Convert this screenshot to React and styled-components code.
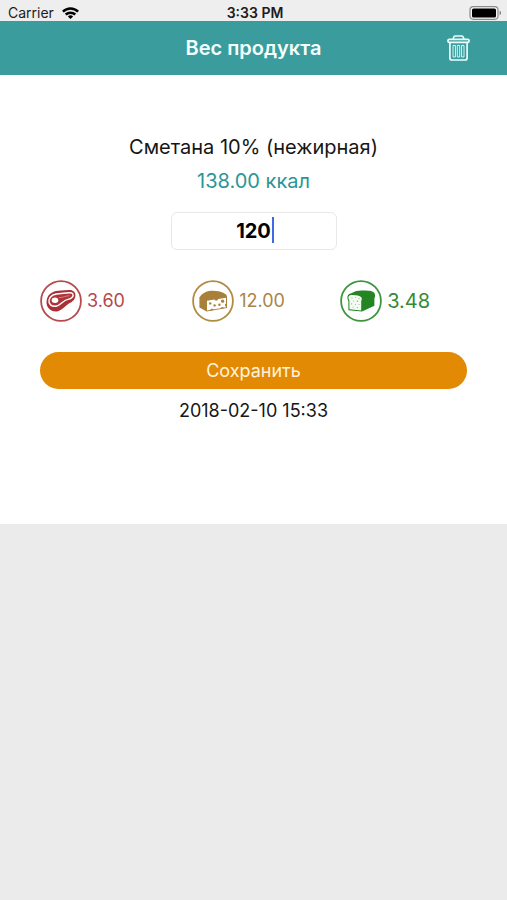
import React, { useState } from 'react';
import styled, { createGlobalStyle } from 'styled-components';

const GlobalStyle = createGlobalStyle`
    * {
        box-sizing: border-box;
    }
    body {
        margin: 0;
        background-color: #ebebeb;
        font-family: 'Inter', 'Liberation Sans', sans-serif;
    }
`

const StatusBar = styled.div`
    display: grid;
    grid-template-columns: 1fr auto 1fr;
    align-items: center;
    height: 21px;
    padding: 5px 5px 0 8px;
    background-color: #eeeeee;
    color: #1c1c1c;
    font-size: 14px;
    line-height: 16px;
`

const Carrier = styled.div`
    display: flex;
    align-items: center;
    gap: 8px;
`

const Time = styled.div`
    font-weight: 600;
`

const Battery = styled.div`
    display: flex;
    justify-content: flex-end;
`

const Header = styled.header`
    display: grid;
    grid-template-columns: 1fr auto 1fr;
    align-items: center;
    height: 54px;
    padding: 0 37px;
    background-color: #3a9c9c;
`

const Title = styled.h1`
    grid-column: 2;
    margin: 0;
    color: #f4ffff;
    font-size: 20px;
    line-height: 24px;
    font-weight: 600;
`

const DeleteButton = styled.button`
    display: flex;
    justify-self: end;
    padding: 0;
    border: none;
    background: none;
    cursor: pointer;
`

const Content = styled.form`
    display: flex;
    flex-direction: column;
    align-items: center;
    padding: 60px 40px 101px;
    background-color: #ffffff;
`

const ProductName = styled.label`
    color: #161616;
    font-size: 20px;
    line-height: 24px;
`

const Calories = styled.div`
    margin-top: 10px;
    color: #2b9696;
    font-size: 20px;
    line-height: 24px;
`

const WeightField = styled.div`
    position: relative;
    width: 166px;
    margin-top: 19px;
`

const WeightInput = styled.input`
    display: block;
    width: 100%;
    height: 38px;
    padding: 0;
    border: 1px solid #e8e8e8;
    border-radius: 6px;
    outline: none;
    background-color: #ffffff;
    color: #000000;
    caret-color: transparent;
    font-family: inherit;
    font-size: 20px;
    font-weight: 700;
    text-align: center;
`

const Caret = styled.span`
    position: absolute;
    top: 5px;
    left: calc(50% + 18px);
    width: 2px;
    height: 26px;
    background-color: #4169e1;
`

const Nutrients = styled.div`
    display: grid;
    grid-template-columns: 36fr 35fr 30fr;
    width: 100%;
    margin-top: 30px;
`

const Nutrient = styled.div`
    display: flex;
    align-items: center;
    gap: 5px;
    color: ${props => props.$color};
    font-size: ${props => props.$large ? '20px' : '18px'};
    line-height: 24px;
`

const SaveButton = styled.button`
    width: 100%;
    height: 37px;
    margin-top: 30px;
    border: none;
    border-radius: 19px;
    background-color: #e38a05;
    color: #fff3dc;
    font-family: inherit;
    font-size: 18px;
    cursor: pointer;
`

const SavedAt = styled.time`
    margin-top: 10px;
    color: #161616;
    font-size: 18px;
    line-height: 24px;
`

const WifiIcon = () => (
    <svg width="17" height="12" viewBox="0 0 17 12" fill="none" stroke="#000" strokeWidth="2.5" aria-hidden="true">
        <path d="M0.9 4.6C5.2.4 11.8.4 16.1 4.6" />
        <path d="M3.7 7.5C6.4 5 10.6 5 13.3 7.5" />
        <path d="M8.5 12L5.9 9.4C7.3 8 9.7 8 11.1 9.4Z" fill="#000" stroke="none" />
    </svg>
)

const BatteryIcon = () => (
    <svg width="33" height="14" viewBox="0 0 33 14" aria-hidden="true">
        <rect x="1" y="0.7" width="28" height="12.6" rx="3.2" fill="#f6f6f6" stroke="#8c8c8c" strokeWidth="1.2" />
        <rect x="3" y="2.5" width="24" height="9" rx="1.6" fill="#000" />
        <path d="M30.6 4.8C32.4 5.4 32.4 8.6 30.6 9.2Z" fill="#777" />
    </svg>
)

const TrashIcon = () => (
    <svg width="23" height="26" viewBox="0 0 23 26" fill="none" stroke="#e9ffff" strokeWidth="1.7" strokeLinejoin="round" aria-hidden="true">
        <path d="M6 4.4L6.8 2Q7.1 1 8 1H15Q15.9 1 16.2 2L17 4.4" />
        <rect x="1" y="4.4" width="21" height="3" rx="1.2" />
        <path d="M2.9 7.6V23Q2.9 25 4.9 25H18.1Q20.1 25 20.1 23V7.6" />
        <path d="M6 10.4H8.4V22H6ZM10.3 10.4H12.7V22H10.3ZM14.6 10.4H17V22H14.6Z" strokeWidth="0.9" />
    </svg>
)

const MeatIcon = () => (
    <svg width="42" height="42" viewBox="0 0 42 42" aria-hidden="true">
        <circle cx="21" cy="21" r="19.9" fill="none" stroke="#b84a4e" strokeWidth="1.8" />
        <path d="M6.6 21C7.4 13.5 14 10.6 21 10.6C26 10.6 31 8.8 34.2 11.8C36.7 15 35.4 20 31 22.4C26 24.4 24 29 18 31.2C12 32.7 5.6 28 6.6 21Z" fill="#aa3036" />
        <path d="M9 20.2C10 15.5 15.5 13.5 21 13.5C26 13.6 30.5 11.5 32.7 13.6C34.2 16.2 31.5 18.8 28 19.4C22.5 20.5 21 25.2 16 26.2C11.5 26.8 8.2 24 9 20.2Z" fill="#ad343a" stroke="#fff" strokeWidth="1.4" />
        <path d="M19 17.6C23 17.8 25.5 15.8 29.5 15.7" fill="none" stroke="#d79799" strokeWidth="0.8" />
        <ellipse cx="15" cy="20.3" rx="3.3" ry="2.7" fill="#fff" />
    </svg>
)

const CheeseIcon = () => (
    <svg width="42" height="42" viewBox="0 0 42 42" aria-hidden="true">
        <circle cx="21" cy="21" r="19.9" fill="none" stroke="#b08c43" strokeWidth="1.8" />
        <path d="M7.4 17.4C9.6 14 13 11.6 17 11C23 10.4 30 11.4 34 14.4C35 15.4 35 16.4 35 17.6V28L14.6 31.6L7.4 27.6Z" fill="#a9803a" />
        <path d="M15 20.8L22.4 19.6C23 21.2 25.8 21 26.2 19L34 17.8V27.2L15 30.6Z" fill="#fff" />
        <g fill="#a9803a">
            <circle cx="18.2" cy="23.4" r="1.2" />
            <circle cx="30.6" cy="21.2" r="1.6" />
            <circle cx="22.6" cy="25.4" r="1.2" />
            <circle cx="27.4" cy="24.8" r="1.2" />
            <path d="M18 30.6A2 2 0 0 1 21.8 30ZM28.6 28.6A1.8 1.8 0 0 1 32 28ZM34.4 23.6A1.5 1.5 0 0 0 34.4 26.6Z" />
        </g>
    </svg>
)

const BreadIcon = () => (
    <svg width="42" height="42" viewBox="0 0 42 42" aria-hidden="true">
        <circle cx="21" cy="21" r="19.9" fill="none" stroke="#3d963d" strokeWidth="1.8" />
        <path d="M7.4 17C7.4 15 9 13.8 11.4 13.2C15 11 19 10.4 23 10.6C27 10.6 32 10.8 34.2 12.8C35.6 14.6 35 17 34.4 18.4V25.8L22 31.4L8.4 30.2V21C7.8 20 7.4 18.6 7.4 17Z" fill="#238523" />
        <path d="M8.4 17.4C8.4 15.2 11.4 14.8 14.6 15.2C18.6 15.4 22 16.2 21.8 19C21.8 20 21.2 20.8 21.2 21.6V30.4L9.4 29.2V20.6C9 19.6 8.4 18.6 8.4 17.4Z" fill="#f3fbf3" />
        <g fill="#7dbb7d">
            <circle cx="12" cy="18" r="0.6" />
            <circle cx="15.6" cy="17.4" r="0.5" />
            <circle cx="19" cy="18.6" r="0.6" />
            <circle cx="13.4" cy="21" r="0.5" />
            <circle cx="17.4" cy="21.2" r="0.7" />
            <circle cx="11.6" cy="23.8" r="0.6" />
            <circle cx="15.4" cy="24.4" r="0.5" />
            <circle cx="19" cy="24.6" r="0.5" />
            <circle cx="13" cy="27" r="0.5" />
            <circle cx="17.4" cy="27.6" r="0.6" />
        </g>
    </svg>
)

const App = () => {
    const [weight, setWeight] = useState('120');

    return (
        <>
            <GlobalStyle />
            <StatusBar>
                <Carrier>Carrier <WifiIcon /></Carrier>
                <Time>3:33 PM</Time>
                <Battery><BatteryIcon /></Battery>
            </StatusBar>
            <Header>
                <Title>Вес продукта</Title>
                <DeleteButton type="button" aria-label="Удалить"><TrashIcon /></DeleteButton>
            </Header>
            <Content onSubmit={event => event.preventDefault()}>
                <ProductName htmlFor="weight">Сметана 10% (нежирная)</ProductName>
                <Calories>138.00 ккал</Calories>
                <WeightField>
                    <WeightInput
                        id="weight"
                        name="weight"
                        type="text"
                        inputMode="decimal"
                        value={weight}
                        onChange={event => setWeight(event.target.value)}
                        />
                    <Caret />
                </WeightField>
                <Nutrients>
                    <Nutrient $color="#b5474b"><MeatIcon />3.60</Nutrient>
                    <Nutrient $color="#a98545"><CheeseIcon />12.00</Nutrient>
                    <Nutrient $color="#328c32" $large><BreadIcon />3.48</Nutrient>
                </Nutrients>
                <SaveButton type="submit">Сохранить</SaveButton>
                <SavedAt dateTime="2018-02-10T15:33">2018-02-10 15:33</SavedAt>
            </Content>
        </>
    )
}

export default App;
